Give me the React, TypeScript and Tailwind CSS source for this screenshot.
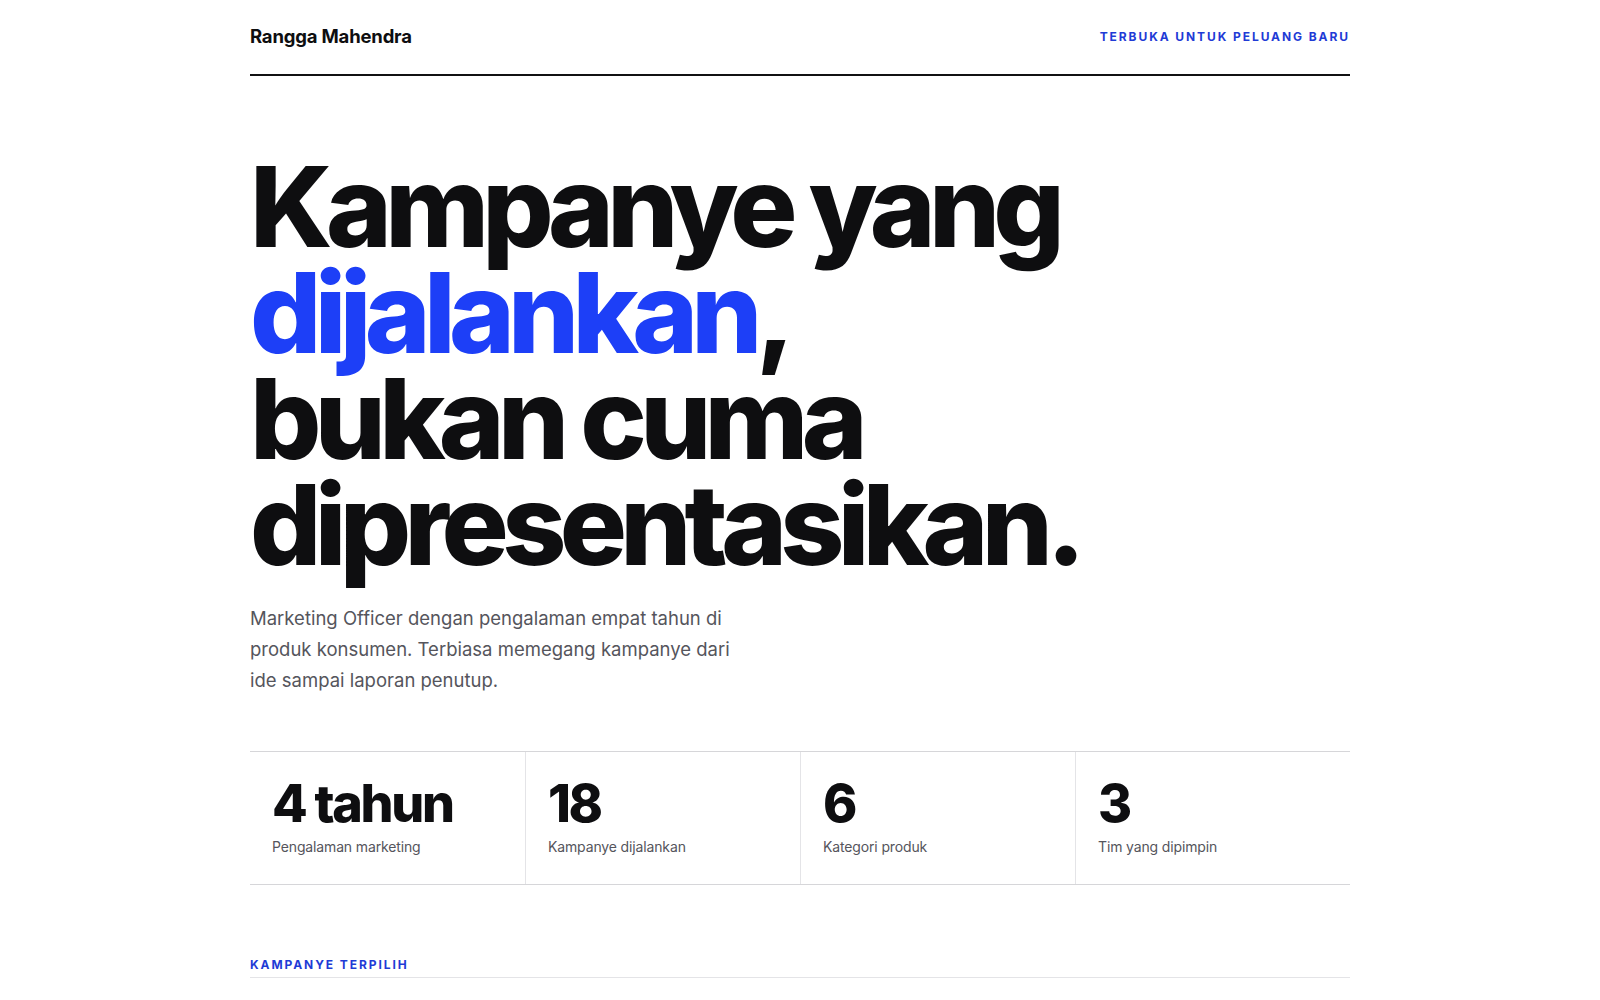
import React from "react";

const stats = [
  { value: "4 tahun", label: "Pengalaman marketing" },
  { value: "18", label: "Kampanye dijalankan" },
  { value: "6", label: "Kategori produk" },
  { value: "3", label: "Tim yang dipimpin" },
];

export default function App() {
  return (
    <div className="min-h-screen bg-white text-[#0e0e10] font-['Inter','Noto_Sans',sans-serif]">
      <div className="mx-auto w-[1100px]">
        {/* Header */}
        <header className="flex h-[76px] items-center justify-between border-b-2 border-[#111113]">
          <span className="text-[18.5px] font-bold tracking-[-0.01em]">Rangga Mahendra</span>
          <span className="text-[12px] font-bold uppercase tracking-[0.16em] text-[#1f3bd6]">
            Terbuka untuk peluang baru
          </span>
        </header>

        {/* Hero */}
        <section className="pt-[77px]">
          <h1 className="text-[112px] font-extrabold leading-[106px] tracking-[-0.06em]">
            Kampanye yang
            <br />
            <span className="text-[#1d3ff7]">dijalankan</span>,
            <br />
            bukan cuma
            <br />
            dipresentasikan.
          </h1>
          <p className="mt-[26px] max-w-[485px] text-[18.5px] leading-[31px] text-[#55555c]">
            Marketing Officer dengan pengalaman empat tahun di produk konsumen. Terbiasa memegang
            kampanye dari ide sampai laporan penutup.
          </p>
        </section>

        {/* Stats */}
        <section className="mt-[55px] grid grid-cols-4 border-y border-[#d6d6d9]">
          {stats.map((s, i) => (
            <div
              key={s.label}
              className={`px-[22px] pt-[26px] pb-[27px] ${i > 0 ? "border-l border-[#e4e4e7]" : ""}`}
            >
              <div className="text-[52px] font-extrabold leading-[52px] tracking-[-0.045em]">{s.value}</div>
              <div className="mt-[7px] text-[14px] leading-[20px] tracking-[-0.01em] text-[#55555c]">
                {s.label}
              </div>
            </div>
          ))}
        </section>

        {/* Selected campaigns */}
        <section className="pt-[72px]">
          <div className="border-b border-[#e4e4e7] pb-[4px] text-[12px] font-bold uppercase leading-[16px] tracking-[0.16em] text-[#1f3bd6]">
            Kampanye terpilih
          </div>
        </section>
      </div>
    </div>
  );
}
